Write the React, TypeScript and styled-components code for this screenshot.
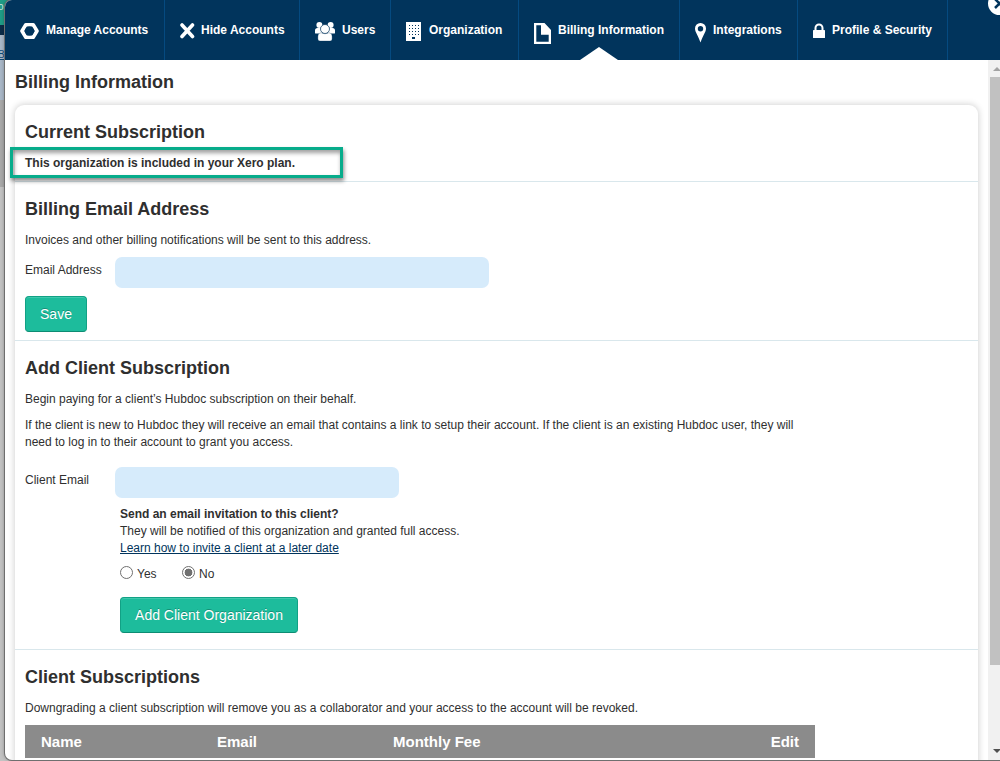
import React from "react";
import styled, { createGlobalStyle } from "styled-components";

const Global = createGlobalStyle`
  * { box-sizing: border-box; }
  body { margin: 0; overflow: hidden; font-family: "Liberation Sans", Arial, sans-serif; font-size: 12px; line-height: 17px; color: #2f2f2f; }
  h1, h2, p { margin: 0; }
`;

const Page = styled.div`
  width: 1000px;
  height: 761px;
  display: flex;
  overflow: hidden;
  background: linear-gradient(to bottom, #1f9c86 0 25px, #0b2b47 25px 35px, #a9b7c7 35px 100px, #a9a9a9 100px 187px, #c3c3c3 187px);
`;

const Backdrop = styled.div`
  width: 5px;
  flex: none;
  overflow: hidden;
  font-size: 10px;
  color: #0e4a78;
`;

const BackdropMark = styled.div<{ $top: number; $light?: boolean }>`
  margin-top: ${(p) => p.$top}px;
  margin-left: -2px;
  height: 12px;
  line-height: 12px;
  text-decoration: ${(p) => (p.$light ? "none" : "underline")};
  color: ${(p) => (p.$light ? "#cfe9e2" : "#0e4a78")};
`;

const Modal = styled.main`
  flex: 1;
  height: 760px;
  display: flex;
  flex-direction: column;
  background: #fff;
  border-radius: 7px 0 0 7px;
  overflow: hidden;
  box-shadow: 0 0 0 1px #6f6f6f, 0 0 4px rgba(0, 0, 0, 0.4);
`;

const Nav = styled.nav`
  position: relative;
  height: 60px;
  flex: none;
  display: flex;
  background: #01345c;
`;

const Tab = styled.a<{ $width: number; $gap: number }>`
  position: relative;
  width: ${(p) => p.$width}px;
  height: 60px;
  padding-left: 15px;
  display: flex;
  align-items: flex-start;
  gap: ${(p) => p.$gap}px;
  border-right: 1px solid #054a80;
  color: #fff;
  font-weight: bold;
  white-space: nowrap;
  svg { display: block; flex: none; margin-top: 20px; }
`;

const TabLabel = styled.span<{ $width: number }>`
  margin-top: 22px;
  width: ${(p) => p.$width}px;
`;

const Pointer = styled.i`
  position: absolute;
  left: 61px;
  bottom: 0;
  width: 38px;
  height: 13px;
  background: #fff;
  clip-path: polygon(50% 0, 100% 100%, 0 100%);
`;

const Close = styled.button`
  position: absolute;
  right: -11px;
  top: -8px;
  width: 23px;
  height: 23px;
  padding: 0;
  border: 0;
  border-radius: 50%;
  background: #fff;
  svg { display: block; margin: 5px; }
`;

const Body = styled.div`
  flex: 1;
  min-height: 0;
  display: flex;
`;

const Content = styled.section`
  width: 983px;
  padding: 11px 10px 0 10px;
  overflow: hidden;
`;

const Title = styled.h1`
  font-size: 18px;
  line-height: 22px;
`;

const Card = styled.div`
  margin-top: 12px;
  height: 680px;
  border-radius: 9px;
  box-shadow: 0 0 6px 1px rgba(0, 0, 0, 0.17);
`;

const Section = styled.section<{ $height: number }>`
  position: relative;
  height: ${(p) => p.$height}px;
  padding: 16px 10px 0;
  border-bottom: 1px solid #d9e7ec;
`;

const Heading = styled.h2`
  font-size: 18px;
  line-height: 22px;
`;

const Text = styled.p<{ $top?: number }>`
  margin-top: ${(p) => p.$top ?? 0}px;
  white-space: nowrap;
`;

const Highlight = styled.div`
  position: absolute;
  left: -5px;
  top: 42px;
  width: 333px;
  height: 31px;
  z-index: 1;
  border: 3px solid #07ac8b;
  box-shadow: 1px 3px 4px rgba(0, 0, 0, 0.45), inset 1px 3px 4px rgba(0, 0, 0, 0.38);
`;

const Field = styled.label<{ $top: number }>`
  margin-top: ${(p) => p.$top}px;
  display: flex;
  align-items: flex-start;
`;

const FieldName = styled.span`
  width: 90px;
  padding-top: 5px;
`;

const Input = styled.input<{ $width: number }>`
  width: ${(p) => p.$width}px;
  height: 31px;
  border: 0;
  border-radius: 7px;
  background: #d6ebfb;
`;

const Button = styled.button<{ $width: number; $top: number }>`
  display: block;
  margin-top: ${(p) => p.$top}px;
  width: ${(p) => p.$width}px;
  height: 36px;
  padding: 0;
  border: 1px solid #12a185;
  border-bottom-color: #0d8c73;
  border-radius: 4px;
  background: #1dbc9c;
  box-shadow: inset 0 1px 0 #3fc8ad;
  color: #fff;
  font: 14px/34px "Liberation Sans", Arial, sans-serif;
  text-shadow: 0 -1px 0 rgba(0, 0, 0, 0.25);
`;

const Invite = styled.div`
  margin: 8px 0 0 95px;
`;

const Link = styled.a`
  color: #01345c;
  text-decoration: underline;
`;

const Choices = styled.div`
  display: flex;
  margin-top: 7px;
`;

const Choice = styled.label`
  width: 62px;
  display: flex;
  align-items: flex-start;
  gap: 4px;
  line-height: 21px;
  height: 19px;
`;

const Radio = styled.input`
  width: 13px;
  height: 13px;
  margin: 2px 0 0;
  appearance: none;
  border: 1px solid #707070;
  border-radius: 50%;
  background: #fff;
  &:checked { background: radial-gradient(circle, #707070 0 3.6px, #fff 4.2px); }
`;

const TableHead = styled.div`
  margin-top: 8px;
  width: 790px;
  height: 33px;
  padding: 0 16px;
  display: grid;
  grid-template-columns: 176px 176px 1fr auto;
  align-items: center;
  background: #8b8b8b;
  color: #fff;
  font-size: 15px;
  font-weight: bold;
`;

const Scrollbar = styled.div`
  width: 12px;
  flex: none;
  display: flex;
  flex-direction: column;
  padding-left: 2px;
  background: #f1f1f1;
`;

const Thumb = styled.div`
  height: 588px;
  background: #c1c1c1;
`;

const Arrow = styled.div<{ $down?: boolean }>`
  height: 17px;
  margin-top: ${(p) => (p.$down ? "77px" : "0")};
  padding: 7px 0 0 3px;
  svg { display: block; }
`;

const HexIcon = () => (
  <svg width="19" height="20" viewBox="0 0 19 20">
    <path d="M5.800 4.700h7.400l3.800 6.300-3.800 6.300H5.800L2 11z" fill="none" stroke="#fff" strokeWidth="3.600" strokeLinejoin="round" />
    <circle cx="9.500" cy="11" r="4.600" fill="#01345c" />
  </svg>
);
const CrossIcon = () => (
  <svg width="15" height="20" viewBox="0 0 15 20">
    <path d="M2 5l10.500 11.500M12.500 5L2 16.500" stroke="#fff" strokeWidth="3.600" strokeLinecap="round" />
  </svg>
);
const UsersIcon = () => (
  <svg width="20" height="22" viewBox="0 0 20 22" fill="#fff">
    <circle cx="4.400" cy="5" r="3" /><circle cx="15.600" cy="5" r="3" />
    <path d="M0 13V10.500Q0 8 2.500 8h3l2 2v3.500H1Q0 13.500 0 13zM20 13V10.500Q20 8 17.500 8h-3l-2 2v3.500h6.500q1 0 1-.5z" />
    <circle cx="10" cy="9" r="4.500" stroke="#01345c" strokeWidth=".7" />
    <path d="M2.900 19v-2.500Q2.900 13 6 12.700q4 2.200 8 0 3.100.3 3.100 3.800V19q0 2-2 2H4.900q-2 0-2-2z" stroke="#01345c" strokeWidth=".3" />
  </svg>
);
const BuildingIcon = () => (
  <svg width="15" height="22" viewBox="0 0 15 22">
    <path d="M0 2h15v19H0z" fill="#fff" />
    <path d="M3 5.500h10M3 8.500h10M3 11.500h10M3 14.500h10" stroke="#01345c" strokeWidth="1" strokeDasharray="1 2" />
    <path d="M6 17h3v2H6z" fill="#01345c" />
  </svg>
);
const DocumentIcon = () => (
  <svg width="17" height="24" viewBox="0 0 17 24">
    <path fillRule="evenodd" d="M0 3h10.500L17 10v14H0zM2.300 5.300v16.400h12.400v-7H7V5.300z" fill="#fff" />
  </svg>
);
const PinIcon = () => (
  <svg width="11" height="23" viewBox="0 0 11 23">
    <path fillRule="evenodd" d="M5.500 3A5.400 5.400 0 0 1 11 8.400C11 12 8 15 5.500 22.500 3 15 0 12 0 8.400A5.400 5.400 0 0 1 5.500 3zm0 3a2.700 2.700 0 1 0 0 5.400 2.700 2.700 0 0 0 0-5.400z" fill="#fff" />
  </svg>
);
const LockIcon = () => (
  <svg width="12" height="20" viewBox="0 0 12 20">
    <path d="M2.500 11V8a3.500 3.500 0 0 1 7 0v3" fill="none" stroke="#fff" strokeWidth="2" />
    <rect y="10" width="12" height="8" rx=".6" fill="#fff" />
  </svg>
);

const tabs = [
  { label: "Manage Accounts", width: 160, gap: 7, text: 103, icon: <HexIcon /> },
  { label: "Hide Accounts", width: 135, gap: 6, text: 85, icon: <CrossIcon /> },
  { label: "Users", width: 91, gap: 7, text: 34, icon: <UsersIcon /> },
  { label: "Organization", width: 128, gap: 8, text: 75, icon: <BuildingIcon /> },
  { label: "Billing Information", width: 161, gap: 7, text: 107, icon: <DocumentIcon />, active: true },
  { label: "Integrations", width: 118, gap: 7, text: 70, icon: <PinIcon /> },
  { label: "Profile & Security", width: 150, gap: 7, text: 101, icon: <LockIcon /> },
];

export default function App() {
  return (
    <Page>
      <Global />
      <Backdrop>
        <BackdropMark $top={1} $light>o</BackdropMark>
        <BackdropMark $top={36}>B</BackdropMark>
      </Backdrop>
      <Modal>
        <Nav>
          {tabs.map((t) => (
            <Tab key={t.label} $width={t.width} $gap={t.gap}>
              {t.icon}
              <TabLabel $width={t.text}>{t.label}</TabLabel>
              {t.active && <Pointer />}
            </Tab>
          ))}
          <Close aria-label="Close">
            <svg width="13" height="13" viewBox="0 0 13 13"><path d="M2 2l9 9M11 2l-9 9" stroke="#01345c" strokeWidth="2.500" /></svg>
          </Close>
        </Nav>
        <Body>
          <Content>
            <Title>Billing Information</Title>
            <Card>
              <Section $height={77}>
                <Heading>Current Subscription</Heading>
                <Text $top={12}><b>This organization is included in your Xero plan.</b></Text>
                <Highlight />
              </Section>
              <Section $height={159}>
                <Heading>Billing Email Address</Heading>
                <Text $top={12}>Invoices and other billing notifications will be sent to this address.</Text>
                <Field $top={8}><FieldName>Email Address</FieldName><Input $width={374} /></Field>
                <Button $width={62} $top={8}>Save</Button>
              </Section>
              <Section $height={309}>
                <Heading>Add Client Subscription</Heading>
                <Text $top={12}>Begin paying for a client’s Hubdoc subscription on their behalf.</Text>
                <Text $top={9}>
                  If the client is new to Hubdoc they will receive an email that contains a link to setup their account. If the client is an existing Hubdoc user, they will
                  <br />
                  need to log in to their account to grant you access.
                </Text>
                <Field $top={16}><FieldName>Client Email</FieldName><Input $width={284} /></Field>
                <Invite>
                  <Text><b>Send an email invitation to this client?</b></Text>
                  <Text>They will be notified of this organization and granted full access.</Text>
                  <Text><Link>Learn how to invite a client at a later date</Link></Text>
                  <Choices>
                    <Choice><Radio type="radio" name="invite" />Yes</Choice>
                    <Choice><Radio type="radio" name="invite" defaultChecked />No</Choice>
                  </Choices>
                  <Button $width={178} $top={14}>Add Client Organization</Button>
                </Invite>
              </Section>
              <Section $height={130}>
                <Heading>Client Subscriptions</Heading>
                <Text $top={12}>Downgrading a client subscription will remove you as a collaborator and your access to the account will be revoked.</Text>
                <TableHead><span>Name</span><span>Email</span><span>Monthly Fee</span><span>Edit</span></TableHead>
              </Section>
            </Card>
          </Content>
          <Scrollbar>
            <Arrow><svg width="8" height="5" viewBox="0 0 8 5"><path d="M0 4l4-4 4 4z" fill="#a3a3a3" /></svg></Arrow>
            <Thumb />
            <Arrow $down><svg width="8" height="5" viewBox="0 0 8 5"><path d="M0 0h8L4 4z" fill="#505050" /></svg></Arrow>
          </Scrollbar>
        </Body>
      </Modal>
    </Page>
  );
}
